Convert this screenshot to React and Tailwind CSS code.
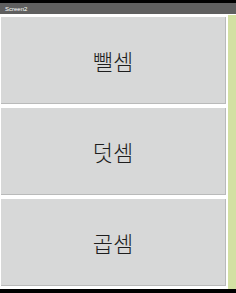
export default function App() {
  const items = ['뺄셈', '덧셈', '곱셈'];
  return (
    <div className="w-[236px] h-[293px] bg-black flex flex-col overflow-hidden" style={{ fontFamily: '"Noto Sans CJK KR", "Liberation Sans", sans-serif' }}>
      <div className="h-[3px] bg-black" />
      <div className="h-[11px] bg-[#5f5f5f] flex items-center px-[5px]">
        <span className="text-[6px] leading-none text-white font-['Liberation_Sans',sans-serif]">Screen2</span>
      </div>
      <div className="h-[275px] bg-white flex">
        <div className="flex-1 flex flex-col gap-[4px] pt-[3px] pl-[1px] pr-[2px]">
          {items.map((t) => (
            <div
              key={t}
              className="h-[87px] bg-[#d7d8d8] border-r border-b border-[#b9baba] flex items-center justify-center"
            >
              <span className="text-[22px] font-light text-[#1e1e1e]">{t}</span>
            </div>
          ))}
        </div>
        <div className="w-[8px] mt-[1px] bg-[#d3e0a3]" />
      </div>
      <div className="flex-1 bg-black" />
    </div>
  );
}
